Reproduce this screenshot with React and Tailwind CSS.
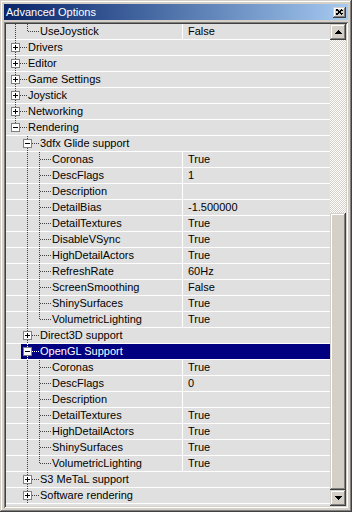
import React from 'react';

const rows = [
  { label: 'UseJoystick', guides: [true], last: true, value: 'False' },
  { label: 'Drivers', guides: [], box: 'plus' },
  { label: 'Editor', guides: [], box: 'plus' },
  { label: 'Game Settings', guides: [], box: 'plus' },
  { label: 'Joystick', guides: [], box: 'plus' },
  { label: 'Networking', guides: [], box: 'plus' },
  { label: 'Rendering', guides: [], box: 'minus', last: true },
  { label: '3dfx Glide support', guides: [false], box: 'minus' },
  { label: 'Coronas', guides: [false, true], value: 'True' },
  { label: 'DescFlags', guides: [false, true], value: '1' },
  { label: 'Description', guides: [false, true], value: '' },
  { label: 'DetailBias', guides: [false, true], value: '-1.500000' },
  { label: 'DetailTextures', guides: [false, true], value: 'True' },
  { label: 'DisableVSync', guides: [false, true], value: 'True' },
  { label: 'HighDetailActors', guides: [false, true], value: 'True' },
  { label: 'RefreshRate', guides: [false, true], value: '60Hz' },
  { label: 'ScreenSmoothing', guides: [false, true], value: 'False' },
  { label: 'ShinySurfaces', guides: [false, true], value: 'True' },
  { label: 'VolumetricLighting', guides: [false, true], value: 'True', last: true },
  { label: 'Direct3D support', guides: [false], box: 'plus' },
  { label: 'OpenGL Support', guides: [false], box: 'minus', selected: true },
  { label: 'Coronas', guides: [false, true], value: 'True' },
  { label: 'DescFlags', guides: [false, true], value: '0' },
  { label: 'Description', guides: [false, true], value: '' },
  { label: 'DetailTextures', guides: [false, true], value: 'True' },
  { label: 'HighDetailActors', guides: [false, true], value: 'True' },
  { label: 'ShinySurfaces', guides: [false, true], value: 'True' },
  { label: 'VolumetricLighting', guides: [false, true], value: 'True', last: true },
  { label: 'S3 MeTaL support', guides: [false], box: 'plus' },
  { label: 'Software rendering', guides: [false], box: 'plus' },
];

const DOT = '#404040';

// vertical tree guide for an ancestor level
const Guide = ({ on }) => (
  <svg width="12" height="16" className="shrink-0" shapeRendering="crispEdges">
    {on && <line x1="6.5" y1="0" x2="6.5" y2="16" stroke={DOT} strokeDasharray="1 1" />}
  </svg>
);

// connector + expand box for the node itself
const Connector = ({ last, box, light }) => {
  const c = light ? '#ffffff' : DOT;
  return (
    <svg width="18" height="16" className="shrink-0 overflow-visible" shapeRendering="crispEdges">
      <line x1="6.5" y1="0" x2="6.5" y2={last ? 8 : 16} stroke={c} strokeDasharray="1 1" />
      <line x1="7" y1="7.5" x2="18" y2="7.5" stroke={c} strokeDasharray="1 1" />
      {box && (
        <g>
          <rect x="2.5" y="3.5" width="8" height="8" fill="#ffffff" stroke="#808080" />
          <line x1="4" y1="7.5" x2="9" y2="7.5" stroke="#000000" />
          {box === 'plus' && <line x1="6.5" y1="5" x2="6.5" y2="10" stroke="#000000" />}
        </g>
      )}
    </svg>
  );
};

const Row = ({ row }) => {
  const leaf = row.value !== undefined;
  return (
    <div className="flex h-4 shrink-0 shadow-[inset_0_-1px_0_#ffffff]">
      <div className={leaf ? 'flex w-[176px] shrink-0 overflow-hidden' : 'flex flex-1'}>
        <div className="w-[3px] shrink-0" />
        {row.guides.map((g, i) => (
          <Guide key={i} on={g} />
        ))}
        <div className={`flex h-[15px] flex-1 ${row.selected ? 'bg-[#000080] text-white' : ''}`}>
          <Connector last={row.last} box={row.box} light={row.selected} />
          <span className="ml-px whitespace-nowrap leading-[15px]">{row.label}</span>
        </div>
      </div>
      {leaf && (
        <div className="h-[15px] flex-1 border-l border-white pl-[5px] leading-[15px]">{row.value}</div>
      )}
    </div>
  );
};

const raised =
  'bg-[#d4d0c8] shadow-[inset_-1px_-1px_0_#404040,inset_1px_1px_0_#d4d0c8,inset_-2px_-2px_0_#808080,inset_2px_2px_0_#ffffff]';

const Arrow = ({ down }) => (
  <svg width="7" height="4" shapeRendering="crispEdges">
    <polygon points={down ? '0,0 7,0 3.5,4' : '3.5,0 7,4 0,4'} fill="#000000" />
  </svg>
);

export default function App() {
  return (
    <div
      className={`flex h-[512px] w-[352px] flex-col p-[4px] font-['Liberation_Sans',Arial,sans-serif] text-[11px] text-black ${raised}`}
    >
      <div className="flex h-4 shrink-0 items-center justify-between bg-gradient-to-r from-[#0a246a] to-[#a6caf0] pl-[2px] pr-[2px]">
        <span className="text-[11px] leading-4 text-white">Advanced Options</span>
        <div className={`flex h-[11px] w-[13px] items-center justify-center ${raised}`}>
          <svg width="7" height="6" shapeRendering="crispEdges">
            <path d="M0.5 0.5 L6.5 5.5 M6.5 0.5 L0.5 5.5" stroke="#000000" strokeWidth="1.6" />
          </svg>
        </div>
      </div>

      <div className="mt-[2px] flex min-h-0 flex-1 p-[2px] shadow-[inset_1px_1px_0_#808080,inset_-1px_-1px_0_#ffffff,inset_2px_2px_0_#404040,inset_-2px_-2px_0_#d4d0c8]">
        <div className="flex min-w-0 flex-1 flex-col overflow-hidden bg-[#e0e0e0]">
          {rows.map((r, i) => (
            <Row key={i} row={r} />
          ))}
        </div>

        <div className="flex w-4 shrink-0 flex-col">
          <div className={`flex h-4 shrink-0 items-center justify-center ${raised}`}>
            <Arrow />
          </div>
          <div className="h-[173px] shrink-0 bg-[image:repeating-conic-gradient(#d4d0c8_0_25%,#ffffff_0_50%)] bg-[length:2px_2px]" />
          <div className={`flex-1 ${raised}`} />
          <div className={`flex h-4 shrink-0 items-center justify-center ${raised}`}>
            <Arrow down />
          </div>
        </div>
      </div>
    </div>
  );
}
